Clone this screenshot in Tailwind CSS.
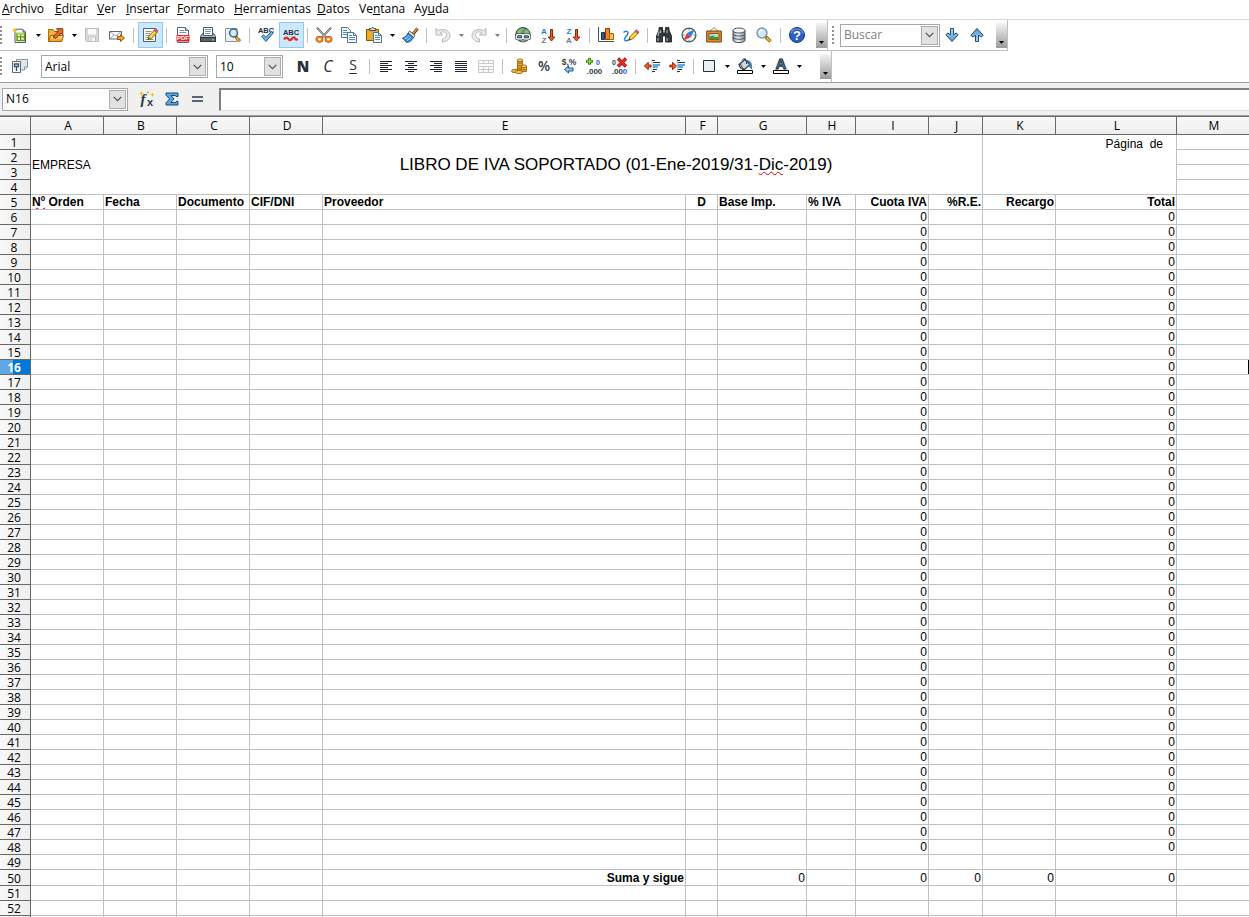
<!DOCTYPE html>
<html lang="es">
<head>
<meta charset="utf-8">
<title>Libro de IVA soportado</title>
<script src="https://cdn.jsdelivr.net/npm/@tailwindcss/browser@4"></script>
</head>
<body class="bg-white">
<svg width="0" height="0" class="absolute" aria-hidden="true">
  <defs>
    <linearGradient id="gold" x1="0" y1="0" x2="0" y2="1"><stop offset="0" stop-color="#ffe08a"/><stop offset="1" stop-color="#e89a1c"/></linearGradient>
    <linearGradient id="blue" x1="0" y1="0" x2="0" y2="1"><stop offset="0" stop-color="#b9dcf5"/><stop offset="1" stop-color="#4d94cf"/></linearGradient>
    <linearGradient id="metal" x1="0" y1="0" x2="1" y2="0"><stop offset="0" stop-color="#8b949c"/><stop offset=".4" stop-color="#f4f6f8"/><stop offset="1" stop-color="#7c858d"/></linearGradient>
  </defs>
  <symbol id="drop" viewBox="0 0 5 3"><path d="M0 0h5L2.500 3z" fill="#000"/></symbol>
  <symbol id="chev" viewBox="0 0 9 6"><path d="M.7.8 4.500 4.600 8.300.8" fill="none" stroke="#505050" stroke-width="1.200"/></symbol>
  <symbol id="arrowDown" viewBox="0 0 16 16"><path d="M6.500 1.500h3v6.200l3-1.700 1.500 1.800-6 6.700-6-6.700L3.500 6l3 1.700z" fill="url(#blue)" stroke="#1d4a73" stroke-linejoin="round"/></symbol>
</svg>

<div class="flex h-screen flex-col overflow-hidden font-['Open_Sans','Noto_Sans',sans-serif] text-xs text-black">
  <nav aria-label="Menú" class="flex h-[20px] shrink-0 items-start border-b border-[#d8d8d8] pl-[2px] text-left leading-[18px]">
    <button class="w-[53px] text-left whitespace-nowrap"><u>A</u>rchivo</button>
    <button class="w-[42px] text-left whitespace-nowrap"><u>E</u>ditar</button>
    <button class="w-[29px] text-left whitespace-nowrap"><u>V</u>er</button>
    <button class="w-[51px] text-left whitespace-nowrap"><u>I</u>nsertar</button>
    <button class="w-[57px] text-left whitespace-nowrap"><u>F</u>ormato</button>
    <button class="w-[83px] text-left whitespace-nowrap"><u>H</u>erramientas</button>
    <button class="w-[42px] text-left whitespace-nowrap"><u>D</u>atos</button>
    <button class="w-[55px] text-left whitespace-nowrap">Ve<u>n</u>tana</button>
    <button class="text-left whitespace-nowrap">Ay<u>u</u>da</button>
  </nav>

  <div class="flex h-[31px] shrink-0">
    <div role="toolbar" aria-label="Estándar" class="flex items-center border-r border-b border-[#c0c0c0] [&_button]:flex [&_button]:shrink-0 [&_button]:items-center [&_button]:justify-center [&_button]:pr-px [&_hr]:mr-[4px] [&_hr]:ml-[3px] [&_hr]:h-[15px] [&_hr]:w-px [&_hr]:border-0 [&_hr]:bg-[#c0c0c0] [&_svg]:overflow-visible">
      <span class="h-[18px] w-[8px] border-l-2 border-dotted border-[#909090]"></span>
      <button class="h-[26px] w-[25px]" aria-label="Nuevo"><svg class="size-[16px]" viewBox="0 0 16 16"><path d="M3 2.500h8l2.500 2.500v10.500H3z" fill="#fff" stroke="#4b5a66"/><path d="M4 1.500h6l1 1.500H4z" fill="#8b98a2"/><path d="M11 2.500V5h2.500" fill="#cfd8de" stroke="#4b5a66"/><path d="M5 6.500h7.500v7H5z" fill="#fff" stroke="#5c9400" stroke-width="1.400"/><path d="M5 9.900h7.500M8.700 6.500v7" stroke="#5c9400" stroke-width="1.200"/><path d="M5 6h7.500v1.500H5z" fill="#b0d84b"/><path d="M2.500 0 3.500 2.500 6 3.500 3.500 4.500 2.500 7 1.500 4.500 0 3.500 1.500 2.500z" fill="#f7c52c"/></svg></button>
      <button class="h-[26px] w-[11px]" aria-label="Nuevo: más"><svg class="h-[3px] w-[5px]"><use href="#drop"/></svg></button>
      <button class="h-[26px] w-[25px]" aria-label="Abrir"><svg class="size-[16px]" viewBox="0 0 16 16"><path d="M.6 14.500V2.500h4.400l1.500 2h6v3" fill="#f0b440" stroke="#a06300"/><path d="m.8 14.500 1.700-6h13l-1.700 6z" fill="url(#gold)" stroke="#a66500" stroke-linejoin="round"/><path d="m5 10 5.500-6L8.500 1.700h6.300v6.300l-1.900-2-5 5.500z" fill="#e96a1f" stroke="#7e2600" stroke-width=".9"/></svg></button>
      <button class="h-[26px] w-[11px]" aria-label="Abrir: más"><svg class="h-[3px] w-[5px]"><use href="#drop"/></svg></button>
      <button class="h-[26px] w-[25px]" aria-label="Guardar" disabled><svg class="size-[16px]" viewBox="0 0 16 16"><path d="M1.500 1.500h13v13h-12l-1-1z" fill="#d9d9d9" stroke="#bdbdbd"/><path d="M4 2h8v5.500H4z" fill="#fafafa"/><path d="M4.500 10h7v4.500h-7z" fill="#f7f7f7" stroke="#c4c4c4"/><path d="M6 11.500h1.500V14H6z" fill="#c4c4c4"/></svg></button>
      <button class="h-[26px] w-[25px]" aria-label="Enviar por correo"><svg class="size-[16px]" viewBox="0 0 16 16"><path d="M.5 4.500h12v7.500H.5z" fill="#fff" stroke="#5a6b78"/><path d="m.8 4.800 5.700 4 5.700-4M.8 12 5 8M8 8l2 2" fill="none" stroke="#7d8d99" stroke-width=".8"/><path d="M8.500 9.500h3v-2l4 3.500-4 3.500v-2h-3z" fill="#f4a32a" stroke="#8e4d00" stroke-width=".9" stroke-linejoin="round"/></svg></button>
      <hr>
      <button class="h-[26px] w-[25px] border border-[#90c8f6] bg-[#cce8ff]" aria-label="Modo de edición" aria-pressed="true"><svg class="size-[16px] shrink-0" viewBox="0 0 16 16"><path d="M1.500 1.500h12v13h-12z" fill="#fff" stroke="#4f6373"/><path d="M3.500 4.500h6M3.500 6.500h4.500M3.500 8.500h3.500M3.500 10.500h2.500M3.500 12.500h8" stroke="#7d95a8"/><path d="m6 12.500 1-3.500 6-6.500 2.500 2.300-6 6.700z" fill="#ffd23e" stroke="#865a00" stroke-width=".9"/><path d="m12 3.300 1.600-1.800 2.200 2-1.600 1.900z" fill="#e9607c" stroke="#9c2e46" stroke-width=".7"/><path d="m6 12.500.5-1.700 1.200 1z" fill="#222"/></svg></button>
      <hr>
      <button class="h-[26px] w-[25px]" aria-label="Exportar a PDF"><svg class="size-[16px]" viewBox="0 0 16 16"><path d="M2.500.5h8l3 3v12h-11z" fill="#fff" stroke="#5a6b78"/><path d="M10.500.5v3h3" fill="#d6dee4" stroke="#5a6b78"/><path d="M4.500 3.500h4.500M4.500 5.500h7" stroke="#8598a6"/><path d="M1.500 8h13v6.500h-13z" fill="#e3242b"/><text x="8" y="13.300" font-family="Liberation Sans" font-size="6" font-weight="700" text-anchor="middle" fill="#fff">PDF</text></svg></button>
      <button class="h-[26px] w-[25px]" aria-label="Imprimir"><svg class="size-[16px]" viewBox="0 0 16 16"><path d="m.5 9.500 2-3h11l2 3v5H.5z" fill="#aeb7be" stroke="#37434c"/><path d="M3.500.5h9v8h-9z" fill="#fff" stroke="#4a5a66"/><path d="M5 2.500h6M5 4.500h6M5 6.500h5" stroke="#6a98bf"/><path d="M.5 10.500h15v4H.5z" fill="#56626b" stroke="#2c373f"/><path d="M12 12h2v1.500h-2z" fill="#7ed321"/></svg></button>
      <button class="h-[26px] w-[25px]" aria-label="Vista previa"><svg class="size-[16px]" viewBox="0 0 16 16"><path d="M.5 1.500h11.500v13H.5z" fill="#e9eef2" stroke="#8796a1"/><path d="m10.500 9.500 4.500 4.800" stroke="#8e5a00" stroke-width="3"/><path d="m11.200 10.200 3.500 3.800" stroke="#f2b130" stroke-width="1.500"/><circle cx="8.500" cy="6" r="3.900" fill="#d4ebfb" stroke="#44637c" stroke-width="1.500"/></svg></button>
      <hr>
      <button class="h-[26px] w-[25px]" aria-label="Ortografía"><svg class="size-[16px]" viewBox="0 0 16 16"><text x="8" y="5.500" font-family="Liberation Sans" font-size="7.500" font-weight="700" text-anchor="middle" fill="#26303b">ABC</text><path d="m3.500 9.500 2-1.700L8 10.300l5.500-6L15.200 6 8 14.500z" fill="#6cb4ec" stroke="#1d5485" stroke-width=".9"/></svg></button>
      <button class="h-[26px] w-[25px] border border-[#90c8f6] bg-[#cce8ff]" aria-label="Revisión automática" aria-pressed="true"><svg class="size-[16px] shrink-0" viewBox="0 0 16 16"><text x="8" y="7.500" font-family="Liberation Sans" font-size="7.500" font-weight="700" text-anchor="middle" fill="#26303b">ABC</text><path d="M1 12.500c1.500-2.500 3-2.500 4.300-.7s2.300 2 3.700-.2 2.600-1.400 3.200 0 1.300 1.200 2.600.4" fill="none" stroke="#e0281e" stroke-width="2.200"/></svg></button>
      <hr>
      <button class="h-[26px] w-[25px]" aria-label="Cortar"><svg class="size-[16px]" viewBox="0 0 16 16"><path d="M1 .8 10.500 11M15 .8 5.500 11" stroke="#5e676f" stroke-width="2"/><path d="M1.500 1.500 9.500 10M14.500 1.500l-8 8.500" stroke="#d5dbe0" stroke-width=".8"/><ellipse cx="3.500" cy="12.300" rx="2.500" ry="2" fill="none" stroke="#a34500" stroke-width="2.800"/><ellipse cx="12.500" cy="12.300" rx="2.500" ry="2" fill="none" stroke="#a34500" stroke-width="2.800"/><ellipse cx="3.500" cy="12.300" rx="2.500" ry="2" fill="#fff" stroke="#f58220" stroke-width="1.800"/><ellipse cx="12.500" cy="12.300" rx="2.500" ry="2" fill="#fff" stroke="#f58220" stroke-width="1.800"/></svg></button>
      <button class="h-[26px] w-[25px]" aria-label="Copiar"><svg class="size-[16px]" viewBox="0 0 16 16"><path d="M.5.500h6l3 3v7h-9z" fill="#f2f7fb" stroke="#5a7184"/><path d="M2 3.500h4M2 5.500h5M2 7.500h5" stroke="#4b8fc4"/><path d="M6.500 5.500h6l3 3v7h-9z" fill="#f2f7fb" stroke="#5a7184"/><path d="M12.500 5.500v3h3" fill="none" stroke="#5a7184"/><path d="M8 8.500h3M8 10.500h6M8 12.500h6" stroke="#4b8fc4"/></svg></button>
      <button class="h-[26px] w-[25px]" aria-label="Pegar"><svg class="size-[16px]" viewBox="0 0 16 16"><path d="M.5 2.500h12v11H.5z" fill="#e9aa27" stroke="#8a5700"/><path d="M3.500 3.500v-2h1.800c.4-1.300 2.200-1.300 2.600 0h1.800v2z" fill="#d5dbe0" stroke="#3f4a53"/><path d="M7.500 5.500h5l3 3v7h-8z" fill="#f2f7fb" stroke="#5a7184"/><path d="M12.500 5.500v3h3" fill="none" stroke="#5a7184"/><path d="M9 8.500h2.500M9 10.500h5M9 12.500h5" stroke="#4b8fc4"/></svg></button>
      <button class="h-[26px] w-[11px]" aria-label="Pegar: más"><svg class="h-[3px] w-[5px]"><use href="#drop"/></svg></button>
      <button class="h-[26px] w-[25px]" aria-label="Clonar formato"><svg class="size-[16px]" viewBox="0 0 16 16"><path d="M15.500 1.500 11 7" stroke="#6b3600" stroke-width="3"/><path d="M15 1.800 11 6.500" stroke="#e99033" stroke-width="1.600"/><path d="m7.500 4 5.500 4.500-1.500 2L6 6.300z" fill="#dce1e5" stroke="#4c5962" stroke-width=".9"/><path d="M6 6 11.500 10.500c-1.500 3-4.500 5-7 5L.5 11c2.500-.5 4.300-2.300 5.500-5z" fill="#3f91d8" stroke="#174c80" stroke-width=".9"/><path d="M3 11.500c2-.5 3-1.500 4-3M5 13.500c1.500-.7 2.800-2 3.600-3.300" stroke="#a8d4f5" fill="none"/></svg></button>
      <hr>
      <button class="h-[26px] w-[25px]" aria-label="Deshacer" disabled><svg class="size-[16px]" viewBox="0 0 16 16"><path d="M1 1.500v6.500h6.500L5.300 5.800c4-2.600 7.500.4 5.700 3.800-.7 1.300-2 2.200-3.500 2.400v3c4.500-.5 7.500-3.200 7.500-6.500C15 3.500 8.500.8 3.300 3.800z" fill="#ececec" stroke="#b5b5b5"/></svg></button>
      <button class="h-[26px] w-[11px] opacity-50" aria-label="Deshacer: más" disabled><svg class="h-[3px] w-[5px]"><use href="#drop"/></svg></button>
      <button class="h-[26px] w-[25px]" aria-label="Rehacer" disabled><svg class="size-[16px]" viewBox="0 0 16 16"><path d="M15 1.500v6.500H8.500l2.200-2.200c-4-2.600-7.500.4-5.700 3.800.7 1.300 2 2.200 3.500 2.400v3C4 14.500 1 11.800 1 8.500 1 3.500 7.500.8 12.700 3.800z" fill="#ececec" stroke="#b5b5b5"/></svg></button>
      <button class="h-[26px] w-[11px] opacity-50" aria-label="Rehacer: más" disabled><svg class="h-[3px] w-[5px]"><use href="#drop"/></svg></button>
      <hr>
      <button class="h-[26px] w-[25px]" aria-label="Hiperenlace"><svg class="size-[16px]" viewBox="0 0 16 16"><circle cx="8" cy="7.700" r="7.200" fill="#5b87a8" stroke="#2e4454"/><path d="M2 5c2-4 6-4 7-3.500L7 4 5 7 2 8zM10 3l3.500.5L15 8l-3 1-3-3zM4 12h8l-1 2-4 .8z" fill="#8fc04a"/><rect x="1.200" y="7.500" width="7" height="4.500" rx="2.200" fill="none" stroke="#222d35" stroke-width="2.600"/><rect x="7.800" y="7.500" width="7" height="4.500" rx="2.200" fill="none" stroke="#222d35" stroke-width="2.600"/><rect x="1.200" y="7.500" width="7" height="4.500" rx="2.200" fill="none" stroke="#eef2f5" stroke-width="1.400"/><rect x="7.800" y="7.500" width="7" height="4.500" rx="2.200" fill="none" stroke="#eef2f5" stroke-width="1.400"/></svg></button>
      <button class="h-[26px] w-[25px]" aria-label="Orden ascendente"><svg class="size-[16px]" viewBox="0 0 16 16"><text x="4" y="6.500" font-family="Liberation Sans" font-size="8" font-weight="700" text-anchor="middle" fill="#1583d1">A</text><text x="4" y="15.800" font-family="Liberation Sans" font-size="8" font-weight="700" text-anchor="middle" fill="#757b81">Z</text><path d="M10.500 2.500h2v7.500h2.300L11.500 14 8.200 10h2.300z" fill="#ef5a28" stroke="#7e1c00" stroke-width=".9"/></svg></button>
      <button class="h-[26px] w-[25px]" aria-label="Orden descendente"><svg class="size-[16px]" viewBox="0 0 16 16"><text x="4" y="6.500" font-family="Liberation Sans" font-size="8" font-weight="700" text-anchor="middle" fill="#1583d1">Z</text><text x="4" y="15.800" font-family="Liberation Sans" font-size="8" font-weight="700" text-anchor="middle" fill="#757b81">A</text><path d="M10.500 2.500h2v7.500h2.300L11.500 14 8.200 10h2.300z" fill="#ef5a28" stroke="#7e1c00" stroke-width=".9"/></svg></button>
      <hr>
      <button class="h-[26px] w-[25px]" aria-label="Gráfico"><svg class="size-[16px]" viewBox="0 0 16 16"><path d="M.5 0v14.500H16" fill="none" stroke="#4a4f55"/><path d="M3.500 5.500h3v7h-3z" fill="#2d5f8a" stroke="#16334d"/><path d="M7.500 1.500h4v11h-4z" fill="#f58220" stroke="#9c3b00"/><path d="M11.500 6.500h4v6h-4z" fill="#f6c445" stroke="#9a6a00"/></svg></button>
      <button class="h-[26px] w-[25px]" aria-label="Dibujo"><svg class="size-[16px]" viewBox="0 0 16 16"><path d="M.5 5.500C3 3 6 4.500 4.500 7.500 3.500 9.500 1 11 1.500 12.800c1 1.700 4 .5 6-.8" fill="none" stroke="#2e7ee0" stroke-width="1.500"/><path d="m6 13 1-3.500 6-6 2.500 2.300-6 6.200z" fill="#ffd23e" stroke="#865a00" stroke-width=".9"/><path d="m12 4.300 1.400-1.500 2.400 2.300-1.400 1.500z" fill="#e9607c" stroke="#9c2e46" stroke-width=".7"/><path d="m6 13 .5-1.700 1.200 1z" fill="#222"/></svg></button>
      <hr>
      <button class="h-[26px] w-[25px]" aria-label="Buscar y reemplazar"><svg class="size-[16px]" viewBox="0 0 16 16"><path d="M3 .5h3.500V3H7v3h2V3h.5V.5H13V3l2.500 6v6h-6V9h-3v6h-6V9L3 3z" fill="#32393f" stroke="#15191c" stroke-width=".8"/><path d="M3 4.500 2 9M4.500 3v3M11 3v3M2 11v3M11 11v3" stroke="#a4adb3" stroke-width="1.200"/></svg></button>
      <button class="h-[26px] w-[25px]" aria-label="Navegador"><svg class="size-[16px]" viewBox="0 0 16 16"><circle cx="8" cy="8" r="6.900" fill="#eef4f8" stroke="#4b5964" stroke-width="1.300"/><path d="M13.500 2.500 10 10 6 6z" fill="#2380de"/><path d="m2.500 13.500 3.500-7.500 4 4z" fill="#e3342b"/><path d="M8 1.800v1.400M8 12.800v1.400M1.800 8h1.400M12.800 8h1.400" stroke="#607282"/></svg></button>
      <button class="h-[26px] w-[25px]" aria-label="Galería"><svg class="size-[16px]" viewBox="0 0 16 16"><path d="m4 4 4-3.500L12 4" fill="none" stroke="#8f949a"/><path d="M.7 4h14.600v11H.7z" fill="#e38e2d" stroke="#7c4000"/><path d="M3 6.500h10v6H3z" fill="#a8d8f5" stroke="#7c4000" stroke-width=".8"/><path d="M3.400 12.200V10l3-1.500 3 1.700 3.200-.7v2.700z" fill="#4b8f2d"/><circle cx="10.500" cy="8.300" r="1.100" fill="#ffe14f"/></svg></button>
      <button class="h-[26px] w-[25px]" aria-label="Orígenes de datos"><svg class="size-[16px]" viewBox="0 0 16 16"><path d="M2 3.500v9.800c0 3 12 3 12 0V3.500z" fill="url(#metal)" stroke="#4d565e"/><ellipse cx="8" cy="3.500" rx="6" ry="2.500" fill="#f0f3f5" stroke="#4d565e"/><path d="M2 7c0 2.700 12 2.700 12 0M2 10.200c0 2.700 12 2.700 12 0" fill="none" stroke="#4d565e"/></svg></button>
      <button class="h-[26px] w-[25px]" aria-label="Escala"><svg class="size-[16px]" viewBox="0 0 16 16"><path d="m9.500 9.500 5 5" stroke="#8e5a00" stroke-width="3.200"/><path d="m10.500 10.500 3.700 3.700" stroke="#f7bd35" stroke-width="1.700"/><circle cx="6" cy="6" r="4.900" fill="#cfe8fa" stroke="#7c99ae" stroke-width="1.500"/><path d="M3.300 6c0-2 1.300-3 2.700-3" fill="none" stroke="#fff" stroke-width="1.300"/></svg></button>
      <hr>
      <button class="h-[26px] w-[25px]" aria-label="Ayuda"><svg class="size-[16px]" viewBox="0 0 16 16"><circle cx="8" cy="8" r="7.500" fill="#2a5fc4" stroke="#163a86"/><path d="M2 6.500C3 .5 13 .5 14 6.500" fill="none" stroke="#6c96e3" stroke-width="1.200"/><text x="8" y="12.500" font-family="Liberation Sans" font-size="13" font-weight="700" text-anchor="middle" fill="#fff">?</text></svg></button>
      <button class="ml-[6px] h-[25px] w-[11px] bg-linear-to-b from-[#f4f4f4] to-[#9c9c9c] pt-[14px]" aria-label="Más"><svg class="h-[3px] w-[5px]"><use href="#drop"/></svg></button>
    </div>
    <div role="toolbar" aria-label="Buscar" class="flex items-center border-r border-b border-[#c0c0c0] pl-[4px] [&>button]:flex [&>button]:items-center [&>button]:justify-center [&>button]:pr-px">
      <span class="h-[18px] w-[8px] border-l-2 border-dotted border-[#909090]"></span>
      <div class="flex h-[23px] w-[100px] items-center border border-[#a6a6ae] bg-white p-px">
        <input aria-label="Buscar" placeholder="Buscar" class="min-w-0 flex-1 pl-[2px] outline-none placeholder:text-[#808080]">
        <button class="flex h-[19px] w-[17px] items-center justify-center border border-[#adadad] bg-[#e1e1e1]" aria-label="Desplegar búsquedas"><svg class="h-[6px] w-[9px]"><use href="#chev"/></svg></button>
      </div>
      <button class="h-[26px] w-[25px]" aria-label="Buscar siguiente"><svg class="size-[16px]"><use href="#arrowDown"/></svg></button>
      <button class="h-[26px] w-[25px]" aria-label="Buscar anterior"><svg class="size-[16px] rotate-180"><use href="#arrowDown"/></svg></button>
      <button class="ml-[6px] h-[25px] w-[11px] bg-linear-to-b from-[#f4f4f4] to-[#9c9c9c] pt-[14px]" aria-label="Más"><svg class="h-[3px] w-[5px]"><use href="#drop"/></svg></button>
    </div>
  </div>

  <div class="flex h-[32px] shrink-0 border-b border-[#a0a0a0]">
    <div role="toolbar" aria-label="Formato" class="flex items-center border-r border-[#c0c0c0] pb-px [&_hr]:mr-[4px] [&_hr]:ml-[3px] [&_hr]:h-[15px] [&_hr]:w-px [&_hr]:border-0 [&_hr]:bg-[#c0c0c0] [&_svg]:overflow-visible [&>button]:flex [&>button]:shrink-0 [&>button]:items-center [&>button]:justify-center [&>button]:pr-px">
      <span class="h-[18px] w-[8px] border-l-2 border-dotted border-[#909090]"></span>
      <button class="h-[26px] w-[25px]" aria-label="Estilos"><svg class="size-[16px]" viewBox="0 0 16 16"><path d="M4.500 1.500h11v7.500l-3 3h-8z" fill="#dfe6eb" stroke="#8796a1"/><path d="M15.500 9h-3v3" fill="#fff" stroke="#8796a1"/><path d="M.5 3.500h8v11h-8z" fill="#f4f7f9" stroke="#5b6c79"/><path d="M2.500 8.500V6h4v2.500zM4.500 9v4" fill="none" stroke="#35526a" stroke-width="1.300"/></svg></button>
      <div class="relative mt-[4px] ml-[8px] h-[23px] w-[167px] self-start border border-[#a6a6ae] p-px">
        <select aria-label="Nombre de la fuente" class="h-full w-full appearance-none bg-white pl-[2px] outline-none"><option>Arial</option></select>
        <span class="pointer-events-none absolute top-px right-px bottom-px flex w-[17px] items-center justify-center border border-[#adadad] bg-[#e1e1e1]"><svg class="h-[6px] w-[9px]"><use href="#chev"/></svg></span>
      </div>
      <div class="relative mx-[8px] mt-[4px] h-[23px] w-[67px] self-start border border-[#a6a6ae] p-px">
        <select aria-label="Tamaño de la fuente" class="h-full w-full appearance-none bg-white pl-[2px] outline-none"><option>10</option></select>
        <span class="pointer-events-none absolute top-px right-px bottom-px flex w-[17px] items-center justify-center border border-[#adadad] bg-[#e1e1e1]"><svg class="h-[6px] w-[9px]"><use href="#chev"/></svg></span>
      </div>
      <button class="h-[26px] w-[25px] text-[15px] font-extrabold text-[#26303b]" aria-label="Negrita">N</button>
      <button class="h-[26px] w-[25px] text-base font-medium text-[#26303b] italic" aria-label="Cursiva">C</button>
      <button class="h-[26px] w-[25px] pb-[2px] text-sm font-medium text-[#26303b] underline underline-offset-3" aria-label="Subrayado">S</button>
      <hr>
      <button class="h-[26px] w-[25px]" aria-label="Alinear a la izquierda"><svg class="size-[16px]" viewBox="0 0 16 16"><path d="M2 3.500h12M2 5.500h8M2 7.500h12M2 9.500h8M2 11.500h12M2 13.500h8" stroke="#1d2630"/></svg></button>
      <button class="h-[26px] w-[25px]" aria-label="Centrar"><svg class="size-[16px]" viewBox="0 0 16 16"><path d="M2 3.500h12M5 5.500h6M2 7.500h12M5 9.500h6M2 11.500h12M5 13.500h6" stroke="#1d2630"/></svg></button>
      <button class="h-[26px] w-[25px]" aria-label="Alinear a la derecha"><svg class="size-[16px]" viewBox="0 0 16 16"><path d="M2 3.500h12M6 5.500h8M2 7.500h12M6 9.500h8M2 11.500h12M6 13.500h8" stroke="#1d2630"/></svg></button>
      <button class="h-[26px] w-[25px]" aria-label="Justificar"><svg class="size-[16px]" viewBox="0 0 16 16"><path d="M2 3.500h12M2 5.500h12M2 7.500h12M2 9.500h12M2 11.500h12M2 13.500h12" stroke="#1d2630"/></svg></button>
      <button class="h-[26px] w-[25px]" aria-label="Combinar celdas" disabled><svg class="size-[16px]" viewBox="0 0 16 16"><path d="M.5 2.500h15v12H.5zM.5 5.500h15M.5 8.500h15M.5 11.500h15M5.500 2.500v3M10.500 2.500v3M5.500 8.500v6M10.500 8.500v6" fill="#fafafa" stroke="#cbcbcb"/></svg></button>
      <hr>
      <button class="h-[26px] w-[25px]" aria-label="Moneda"><svg class="size-[16px]" viewBox="0 0 16 16"><path d="M6.500 2v10h5V2z" fill="#eda52c" stroke="#8f5a00" stroke-width=".8"/><path d="M6.500 4.500c1 1 4 1 5 0M6.500 7c1 1 4 1 5 0M6.500 9.500c1 1 4 1 5 0" fill="none" stroke="#8f5a00" stroke-width=".8"/><ellipse cx="9" cy="2.200" rx="2.600" ry="1.300" fill="#ffe08a" stroke="#8f5a00" stroke-width=".8"/><path d="M10.500 8v5.500h5V8z" fill="#eda52c" stroke="#8f5a00" stroke-width=".8"/><ellipse cx="13" cy="8.200" rx="2.500" ry="1.300" fill="#ffe08a" stroke="#8f5a00" stroke-width=".8"/><path d="M10.500 11c1 1 4 1 5 0" fill="none" stroke="#8f5a00" stroke-width=".8"/><ellipse cx="4" cy="13" rx="3.500" ry="1.700" fill="#f2b443" stroke="#8f5a00" stroke-width=".8"/><ellipse cx="8" cy="14" rx="3.500" ry="1.600" fill="#f7c65c" stroke="#8f5a00" stroke-width=".8"/></svg></button>
      <button class="h-[26px] w-[25px] text-sm font-semibold text-[#323d48]" aria-label="Porcentaje">%</button>
      <button class="h-[26px] w-[25px]" aria-label="Formato estándar"><svg class="size-[16px]" viewBox="0 0 16 16"><text x="8" y="6.500" font-family="Liberation Sans" font-size="8.500" font-weight="700" text-anchor="middle" fill="#323d48">$,%</text><path d="M3.500 11.500 7.500 8v2h4.500v3H7.500v2z" fill="#8cc4f0" stroke="#1c5488" stroke-width="1"/></svg></button>
      <button class="h-[26px] w-[25px]" aria-label="Añadir decimal"><svg class="size-[16px]" viewBox="0 0 16 16"><path d="M2.500.3h2v2h2v2h-2v2h-2v-2h-2v-2h2z" fill="#8fdc3c" stroke="#2c7800" stroke-width=".9"/><text x="12" y="6.500" font-family="Liberation Sans" font-size="7" font-weight="700" text-anchor="middle" fill="#2b62d9">0</text><text x="8.500" y="15.500" font-family="Liberation Sans" font-size="8" font-weight="700" text-anchor="middle" fill="#323d48">.000</text></svg></button>
      <button class="h-[26px] w-[25px]" aria-label="Eliminar decimal"><svg class="size-[16px]" viewBox="0 0 16 16"><text x="3" y="6.500" font-family="Liberation Sans" font-size="7" font-weight="700" text-anchor="middle" fill="#323d48">0</text><text x="8.500" y="15.500" font-family="Liberation Sans" font-size="8" font-weight="700" text-anchor="middle" fill="#323d48">.00<tspan fill="#2b62d9">0</tspan></text><path d="m7 .5 8 8M15 .5l-8 8" stroke="#8c0d0d" stroke-width="3.200"/><path d="m7.300.8 7.500 7.500M14.700.8 7.200 8.300" stroke="#ee2c24" stroke-width="2"/></svg></button>
      <hr>
      <button class="h-[26px] w-[25px]" aria-label="Reducir sangría"><svg class="size-[16px]" viewBox="0 0 16 16"><path d="M8 2.500h3M8 13.500h3M9 4.500h7M9 11.500h4" stroke="#26303b"/><path d="M9 7h7M9 9h5" stroke="#2a8ed8" stroke-width="1.600"/><path d="M8 1.500v13" stroke="#7b858e" stroke-dasharray="1 1"/><path d="m.3 8 4-3.700V7H7v2H4.300v2.700z" fill="#ef5a28" stroke="#8b2700" stroke-width=".9"/></svg></button>
      <button class="h-[26px] w-[25px]" aria-label="Aumentar sangría"><svg class="size-[16px]" viewBox="0 0 16 16"><path d="M8 2.500h3M8 13.500h3M9 4.500h7M9 11.500h4" stroke="#26303b"/><path d="M9 7h7M9 9h5" stroke="#2a8ed8" stroke-width="1.600"/><path d="M8.500 1.500v13" stroke="#7b858e" stroke-dasharray="1 1"/><path d="M7.500 8 3.500 4.300V7H.8v2h2.700v2.700z" fill="#ef5a28" stroke="#8b2700" stroke-width=".9"/></svg></button>
      <hr>
      <button class="h-[26px] w-[23px]" aria-label="Bordes"><svg class="size-[12px]" viewBox="0 0 12 12"><path d="M.5.500h11v11H.5z" fill="#e9eff4" stroke="#26303b"/></svg></button>
      <button class="h-[26px] w-[13px]" aria-label="Bordes: más"><svg class="h-[3px] w-[5px]"><use href="#drop"/></svg></button>
      <button class="h-[26px] w-[23px]" aria-label="Color de fondo"><svg class="size-[16px]" viewBox="0 0 16 16"><path d="m2 6.500 6-5 5 5-5.500 5c-2 .5-5-2-5.500-5z" fill="#cfd6db" stroke="#37434c" stroke-width="1.300"/><path d="M3.500 6c1 3 2.500 4.500 4 5M5 2.500C5.500 0 9 0 9.500 3v3" fill="none" stroke="#37434c"/><path d="M9.500 2.500c4 0 5.500 3 5 8.500-1.500-1-2-3-2-5z" fill="#338fd0" stroke="#235f8c" stroke-width=".7"/><path d="M.5 12.500h15v3H.5z" fill="#fff" stroke="#000"/></svg></button>
      <button class="h-[26px] w-[13px]" aria-label="Color de fondo: más"><svg class="h-[3px] w-[5px]"><use href="#drop"/></svg></button>
      <button class="h-[26px] w-[23px]" aria-label="Color de fuente"><svg class="size-[16px]" viewBox="0 0 16 16"><text x="8" y="11" font-family="Liberation Sans" font-size="15" font-weight="700" text-anchor="middle" fill="#4a83ab" stroke="#1d2f3d" stroke-width=".9">A</text><path d="M.5 12.500h15v3H.5z" fill="#fff" stroke="#000"/></svg></button>
      <button class="h-[26px] w-[13px]" aria-label="Color de fuente: más"><svg class="h-[3px] w-[5px]"><use href="#drop"/></svg></button>
      <button class="ml-[14px] h-[25px] w-[11px] bg-linear-to-b from-[#f4f4f4] to-[#9c9c9c] pt-[14px]" aria-label="Más"><svg class="h-[3px] w-[5px]"><use href="#drop"/></svg></button>
    </div>
  </div>

  <div class="flex h-[33px] shrink-0 items-center border-b border-[#a0a0a0] bg-[#f0f0f0] pl-[2px]">
    <div class="flex h-[23px] w-[126px] items-center border border-[#a6a6ae] bg-white p-px">
      <input aria-label="Cuadro de nombre" value="N16" class="min-w-0 flex-1 pl-[2px] outline-none">
      <button class="flex h-[19px] w-[17px] items-center justify-center border border-[#adadad] bg-[#e1e1e1]" aria-label="Desplegar nombres"><svg class="h-[6px] w-[9px]"><use href="#chev"/></svg></button>
    </div>
    <button class="ml-[7px] flex h-[26px] w-[25px] items-center justify-center pr-px" aria-label="Asistente de funciones"><svg class="size-[16px] overflow-visible" viewBox="0 0 16 16"><text x="1.500" y="13" font-family="Liberation Serif" font-size="15" font-weight="700" font-style="italic" fill="#26384a">f</text><text x="8" y="15" font-family="Liberation Sans" font-size="11" font-weight="700" fill="#26384a">x</text><path d="m2.500 0 .8 2 2 .8-2 .8-.8 2-.8-2-2-.8 2-.8zM9-.5l.6 1.400 1.400.6-1.400.6L9 3.500l-.6-1.400L7 1.500l1.400-.6zM13.500 1.500l.7 1.500 1.500.7-1.500.7-.7 1.600-.7-1.600-1.500-.7 1.500-.7z" fill="#f6bd22"/></svg></button>
    <button class="flex h-[26px] w-[25px] items-center justify-center pr-px" aria-label="Suma"><svg class="size-[16px]" viewBox="0 0 16 16"><path d="M2 2h12v3.500h-2l-.5-1H7L10 8l-3.200 3.500h5l.7-1.200H14V14H2v-2.200L5.700 8 2 4.200z" fill="#5ba7df" stroke="#164a77" stroke-linejoin="round"/></svg></button>
    <button class="flex h-[26px] w-[25px] items-center justify-center" aria-label="Función"><svg class="h-[6px] w-[11px]" viewBox="0 0 11 6"><path d="M0 1h11M0 5h11" stroke="#26384a" stroke-width="1.600"/></svg></button>
    <input aria-label="Línea de entrada" class="ml-[9px] h-[23px] min-w-0 flex-1 border-t-2 border-b border-l-2 border-t-[#808080] border-b-[#e3e3e3] border-l-[#808080] bg-white pl-1 outline-none">
  </div>

  <table class="w-full shrink-0 table-fixed border-separate border-spacing-0 font-['Liberation_Sans',Arial,sans-serif] leading-[14px]">
    <colgroup>
      <col class="w-[31px]"><col class="w-[73px]"><col class="w-[73px]"><col class="w-[73px]"><col class="w-[73px]"><col class="w-[363px]"><col class="w-[32px]"><col class="w-[89px]"><col class="w-[49px]"><col class="w-[73px]"><col class="w-[54px]"><col class="w-[73px]"><col class="w-[121px]"><col>
    </colgroup>
    <thead><tr id="letters"></tr></thead>
    <tbody id="rows"></tbody>
  </table>
</div>

<script>
const COLS = 'ABCDEFGHIJKLM'.split('');
const CELL = 'h-[15px] border-b border-[#c0c0c0] px-px align-middle whitespace-nowrap overflow-hidden ';
const ROW_HEAD = "border-r border-b border-[#696969] pt-[2px] pr-[2px] text-center leading-[12px] font-['Open_Sans','Noto_Sans',sans-serif] ";

document.getElementById('letters').innerHTML =
  '<th class="h-[19px] border-t border-r border-b border-[#696969] bg-linear-to-b from-[#f8f8f8] to-[#eeeeee] p-0"></th>' +
  COLS.map(c => `<th scope="col" class="h-[19px] border-t border-b border-[#696969] bg-linear-to-b from-[#f8f8f8] to-[#eeeeee] pl-[2px] text-center font-['Open_Sans','Noto_Sans',sans-serif] font-normal ${c === 'M' ? '' : 'border-r'}">${c}</th>`).join('');

const merged = {
  1: `<td colspan="3" rowspan="4" class="${CELL} border-r">EMPRESA</td>
      <td colspan="7" rowspan="4" class="${CELL} border-r text-center text-[17px]">LIBRO DE IVA SOPORTADO (01-Ene-2019/31-<span class="underline decoration-red-600 decoration-wavy decoration-1">Dic</span>-2019)</td>
      <td colspan="2" rowspan="4" class="h-[15px] border-r border-b border-[#c0c0c0] py-[2px] pr-[13px] text-right align-top whitespace-pre">Página  de</td>`,
  2: '', 3: '', 4: ''
};
const titles = {
  A: ['<span class="underline decoration-red-600 decoration-wavy decoration-1">Nº</span> Orden', 'text-left'],
  B: ['Fecha', 'text-left'], C: ['Documento', 'text-left'], D: ['CIF/DNI', 'text-left'], E: ['Proveedor', 'text-left'],
  F: ['D', 'text-center'], G: ['Base Imp.', 'text-left'], H: ['% IVA', 'text-left'], I: ['Cuota IVA', 'text-right'],
  J: ['%R.E.', 'text-right'], K: ['Recargo', 'text-right'], L: ['Total', 'text-right'], M: ['', 'text-left']
};

function cell(row, col) {
  const edge = col === 'M' ? '' : 'border-r ';
  if (row === 5) return `<td class="${CELL}${edge}font-bold ${titles[col][1]}">${titles[col][0]}</td>`;
  let text = '';
  if (row >= 6 && row <= 48 && (col === 'I' || col === 'L')) text = '0';
  if (row === 50 && 'GIJKL'.includes(col)) text = '0';
  if (row === 50 && col === 'E') return `<td class="${CELL}${edge}pt-px text-right font-bold">Suma y sigue</td>`;
  if (row === 16 && col === 'M') return `<td class="${CELL}relative"><span class="absolute -top-px right-0 h-[17px] w-px bg-black"></span></td>`;
  return `<td class="${CELL}${edge}text-right">${text}</td>`;
}

let html = '';
for (let r = 1; r <= 53; r++) {
  const height = r === 50 ? 'h-[16px] ' : 'h-[15px] ';
  const look = r === 16
    ? 'bg-linear-to-r from-[#5ea8e6] from-45% to-[#0078d7] to-45% font-bold text-white'
    : 'bg-linear-to-r from-[#f8f8f8] to-[#eeeeee] font-normal';
  html += `<tr><th scope="row" class="${height}${ROW_HEAD}${look}">${r}</th>`;
  html += r in merged ? merged[r] + cell(r, 'M') : COLS.map(c => cell(r, c)).join('');
  html += '</tr>';
}
document.getElementById('rows').innerHTML = html;
</script>
</body>
</html>
